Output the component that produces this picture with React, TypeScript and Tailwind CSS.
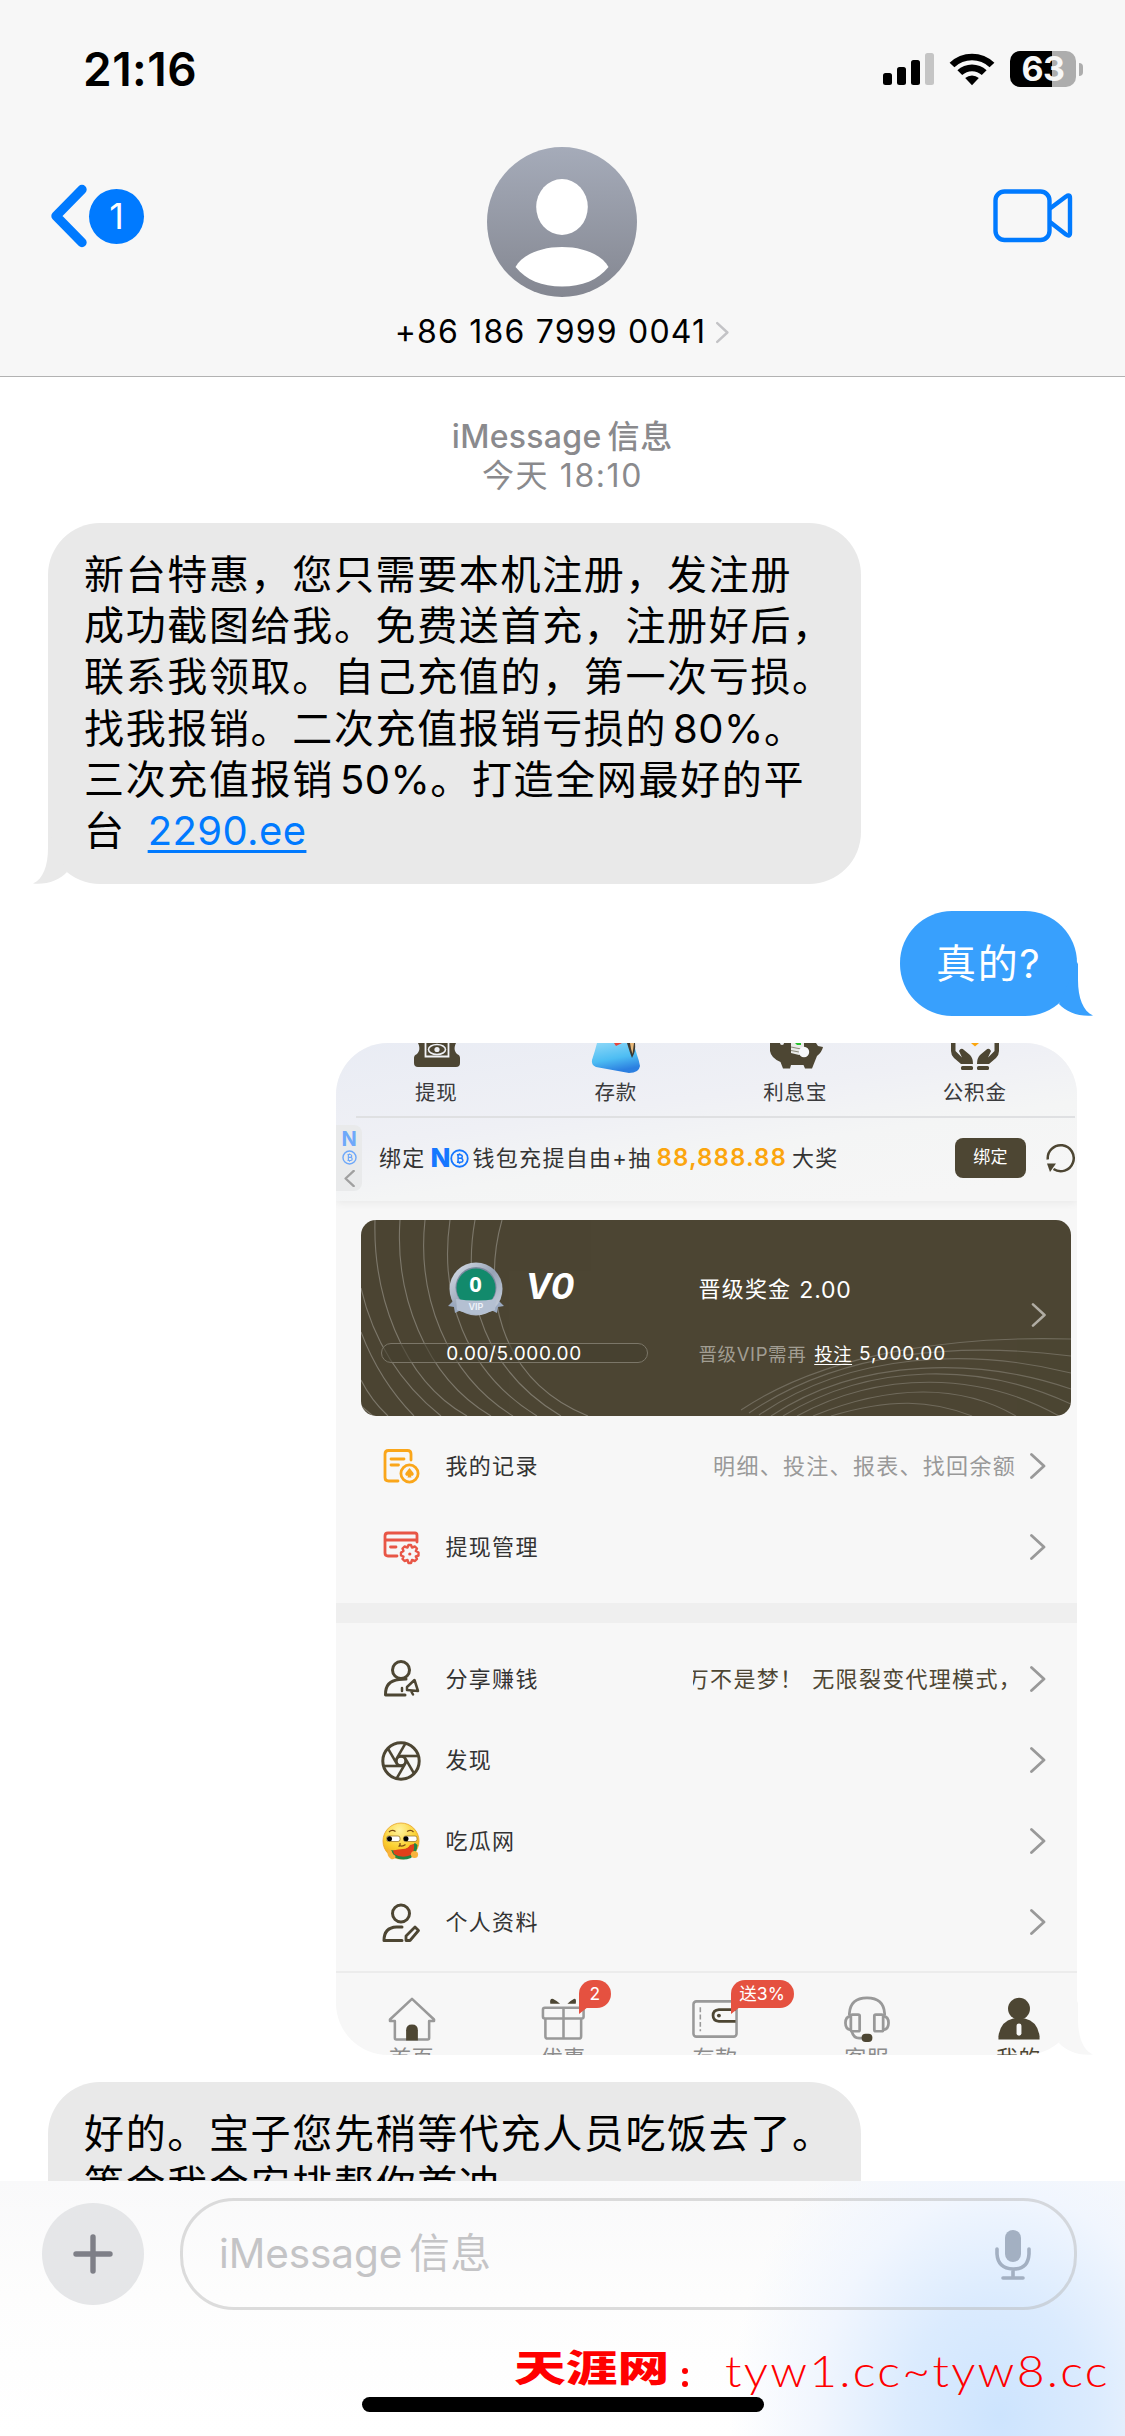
import React from "react";

const OLIVE = "#4d4633";

function Tail({ side, color }: { side: "left" | "right"; color: string }) {
  return (
    <svg
      className={
        side === "left"
          ? "absolute bottom-0 -left-[15px] h-[54px] w-[36px]"
          : "absolute bottom-0 -right-[16px] h-[54px] w-[36px] -scale-x-100"
      }
      viewBox="0 0 36 54"
    >
      <path d="M15 0V18C15 36 10 49 0 53.6C14 55 27 50 34 42Z" fill={color} />
    </svg>
  );
}

function Chevron({ className, width = 3 }: { className: string; width?: number }) {
  return (
    <svg className={className} viewBox="0 0 16 26" fill="none" stroke="currentColor" strokeWidth={width}>
      <path d="M1.5 1.5 14 13 1.5 24.5" strokeLinecap="round" strokeLinejoin="round" />
    </svg>
  );
}

function StatusBar() {
  return (
    <div className="flex h-[138px] items-start justify-between pl-[83px] pr-[42px]">
      <div className="mt-[42px] text-[46px] font-semibold leading-[54px] tracking-[0.5px] text-black">21:16</div>
      <div className="mt-[51px] flex h-9 items-center">
        <svg className="h-[34px] w-[51px]" viewBox="0 0 51 34">
          <rect x="0" y="21" width="9" height="12" rx="2.5" />
          <rect x="14" y="15" width="9" height="18" rx="2.5" />
          <rect x="28" y="8" width="9" height="25" rx="2.5" />
          <rect x="42" y="1" width="9" height="32" rx="2.5" fill="#c5c5c5" />
        </svg>
        <svg className="ml-[15px] h-[34px] w-[46px]" viewBox="0 0 46 34">
          <path d="M0.6 10.8A32 32 0 0 1 45.4 10.8L40.6 15.3A25.6 25.6 0 0 0 5.4 15.3Z" strokeLinejoin="round" />
          <path d="M8.4 18.3A21 21 0 0 1 37.6 18.3L32.8 23A14.6 14.6 0 0 0 13.2 23Z" />
          <path d="M16.2 26A10.4 10.4 0 0 1 29.8 26L23 33.2Z" />
        </svg>
        <div className="ml-[15px] flex h-9 w-[66px] items-center justify-center rounded-[10px] bg-[linear-gradient(90deg,#000_0_42px,#adadad_42px)] text-[34px] font-bold leading-9 tracking-[-0.5px] text-[#f7f7f7]">
          63
        </div>
        <div className="ml-[3px] h-[13px] w-[4px] rounded-r-full bg-[#adadad]" />
      </div>
    </div>
  );
}

function Header() {
  return (
    <header className="h-[377px] shrink-0 border-b border-[#b2b2b2] bg-[#f7f7f7]">
      <StatusBar />
      <div className="flex h-[238px] items-start justify-between pl-[51px] pr-[52px]">
        <div className="mt-[46px] flex w-[300px] items-center">
          <svg className="h-[64px] w-[37px]" viewBox="0 0 37 64" fill="none" stroke="#007aff" strokeWidth="9.4">
            <path d="M31 5.5 5 32 31 58.5" strokeLinecap="round" strokeLinejoin="round" />
          </svg>
          <div className="ml-px flex h-[55px] w-[55px] items-center justify-center rounded-full bg-[#007aff] text-[36px] leading-none text-white">
            1
          </div>
        </div>
        <div className="flex flex-col items-center">
          <svg className="mt-[9px] h-[150px] w-[150px]" viewBox="0 0 150 150">
            <defs>
              <linearGradient id="avatar" x1="0" y1="0" x2="0" y2="1">
                <stop offset="0" stopColor="#a5abb9" />
                <stop offset="1" stopColor="#848791" />
              </linearGradient>
            </defs>
            <circle cx="75" cy="75" r="75" fill="url(#avatar)" />
            <ellipse cx="75" cy="60" rx="25.8" ry="28" fill="#fff" />
            <path d="M28.5 120C35 108 53 100 75 100S115 108 121.500 120C111 133 95 139.500 75 139.500S39 133 28.500 120Z" fill="#fff" />
          </svg>
          <div className="mt-[14px] flex items-center">
            <span className="whitespace-pre text-[32px] leading-[42px] tracking-[1.2px] text-black">+86 186 7999 0041</span>
            <Chevron className="ml-[10px] h-[23px] w-[13px] text-[#c3c3c6]" />
          </div>
        </div>
        <div className="mt-[51px] flex w-[300px] justify-end">
          <svg className="h-[54px] w-[80px]" viewBox="0 0 80 54" fill="none" stroke="#007aff" strokeWidth="4.4" strokeLinejoin="round">
            <rect x="2.500" y="2.500" width="54" height="48.500" rx="9" />
            <path d="M57 19.500 73 7.500Q77 5 77 9V44Q77 48 73 45.500L57 33" />
          </svg>
        </div>
      </div>
    </header>
  );
}

function ReceivedBubble({ className, children, tail = true }: { className: string; children: React.ReactNode; tail?: boolean }) {
  return (
    <div className={"relative ml-[48px] w-[813px] shrink-0 rounded-[52px] bg-[#e9e9e9] pl-[36px] pt-[26px] text-[40px] leading-[51.2px] text-black " + className}>
      {children}
      {tail && <Tail side="left" color="#e9e9e9" />}
    </div>
  );
}

const Line = ({ children }: { children: React.ReactNode }) => (
  <div className="whitespace-pre tracking-[1.65px]">{children}</div>
);

/* ---------- shared picture: account page of a phone app ---------- */

function WithdrawIcon() {
  return (
    <svg className="h-8 w-14" viewBox="0 0 56 32">
      <path d="M9 0H47C45 4 45 8 48 11Q51 12 51 15V20Q51 24 47 24H9Q5 24 5 20V15Q5 12 8 11C11 8 11 4 9 0Z" fill={OLIVE} />
      <path d="M16.500 0V13.500H39.500V0" fill="none" stroke="#f2f3f7" strokeWidth="1.800" />
      <rect x="19" y="0" width="18" height="12" rx="3" fill={OLIVE} />
      <ellipse cx="28" cy="6.500" rx="8.500" ry="5" fill="none" stroke="#eef0f5" strokeWidth="1.600" />
      <circle cx="28" cy="6.500" r="2.600" fill="#eef0f5" />
    </svg>
  );
}

function BagIcon() {
  return (
    <svg className="h-8 w-14" viewBox="0 0 56 32">
      <defs>
        <linearGradient id="bag" x1="0" y1="0" x2="0.300" y2="1">
          <stop offset="0" stopColor="#8ed8f8" />
          <stop offset="0.600" stopColor="#4dbdf3" />
          <stop offset="1" stopColor="#2b7fe0" />
        </linearGradient>
      </defs>
      <path d="M9 0H46C47 8 51 16 52 23Q51 30 41 30L8 24Q3 22 4 17Q7 8 9 0Z" fill="url(#bag)" />
      <path d="M26 0H34L28 3Z" fill="#e5463b" />
      <path d="M39 0Q42 10 44 15Q48 8 47 0Z" fill="#3c3a33" />
      <path d="M42 0Q43 7 44.500 11L46 0Z" fill="#e9b97a" />
    </svg>
  );
}

function PiggyIcon() {
  return (
    <svg className="h-8 w-14" viewBox="0 0 56 32">
      <path d="M2 0H48L50 3L55 4Q54 9 49 13L47 18L44 25.500H37L35.500 22H23L22 25.500H15L12.500 19Q3 15 2 8Z" fill={OLIVE} />
      <path d="M23 0H36V9L31 12L23 10Z" fill="#e9eae8" />
      <path d="M23 4 33 6M23 7.500 31 9" stroke="#8d8b7c" strokeWidth="1.200" />
      <path d="M27 0H33V2H29Z" fill="#26c22c" />
      <circle cx="36" cy="9" r="5.200" fill="#f7f8fb" />
      <circle cx="14" cy="0" r="2" fill="#eef0f5" />
    </svg>
  );
}

function HandsIcon() {
  return (
    <svg className="h-8 w-14" viewBox="0 0 56 32" fill={OLIVE}>
      <path d="M24 0H32L28 3.500Z" fill="#fba50e" />
      <path d="M4 0H8.500V8L15 14.500L12 8Q14 4 17 7L23 12Q26 15 26 21H14L7 15Q4 12 4 8Z" />
      <path d="M52 0H47.500V8L41 14.500L44 8Q42 4 39 7L33 12Q30 15 30 21H42L49 15Q52 12 52 8Z" />
      <rect x="14" y="23" width="12" height="4" rx="1.500" />
      <rect x="30" y="23" width="12" height="4" rx="1.500" />
    </svg>
  );
}

function Coin({ className }: { className: string }) {
  return (
    <svg className={className} viewBox="0 0 20 20" fill="none" stroke="currentColor">
      <circle cx="10" cy="10" r="8.700" strokeWidth="1.900" />
      <path d="M7.300 6H11Q13 6.300 13 8T11 9.800H8.300M8.300 9.800H11.500Q13.600 10.200 13.600 12T11.500 14H7.300M8.500 6V14M10 4.500V6M10 14V15.500" strokeWidth="1.600" />
    </svg>
  );
}

const shortcuts = [
  { label: "提现", Icon: WithdrawIcon },
  { label: "存款", Icon: BagIcon },
  { label: "利息宝", Icon: PiggyIcon },
  { label: "公积金", Icon: HandsIcon },
];

const leftCurves = [
  "M0 160Q10 180 27 196",
  "M0 112Q18 160 53 196",
  "M0 68Q18 146 80 196",
  "M14 0C12 70 38 158 106 196",
  "M39 0C34 72 62 156 130 196",
  "M64 0C56 74 84 154 152 196",
  "M89 0C78 76 104 152 176 196",
  "M114 0C100 78 126 152 200 196",
  "M141 0C122 66 134 158 227 196",
  "M0 186 12 196",
];
const rightCurves = [
  "M380 190C470 130 600 116 710 119",
  "M388 193C480 130 600 122 710 136",
  "M398 195C490 132 610 128 710 153",
  "M410 196C500 136 620 138 710 169",
  "M422 196C510 142 620 142 710 184",
  "M436 196C520 150 620 152 698 196",
  "M452 196C530 164 600 164 655 196",
  "M470 196C530 178 570 180 611 196",
];

function VipCard() {
  return (
    <div className="relative ml-[24.5px] mt-[18.5px] h-[196px] w-[710px] shrink-0 overflow-hidden rounded-[15px] bg-[#4c4533]">
      <svg className="absolute inset-0 h-full w-full" viewBox="0 0 710 196" fill="none" stroke="#fff" strokeWidth="1.100">
        <g opacity="0.270">{leftCurves.map((d) => <path key={d} d={d} />)}</g>
        <g opacity="0.200">{rightCurves.map((d) => <path key={d} d={d} />)}</g>
      </svg>
      <div className="relative flex h-full">
        <div className="w-[338px] pl-[20px] pt-[40px]">
          <div className="flex h-[58px] items-start pl-[66px]">
            <svg className="h-[56px] w-[58px] shrink-0" viewBox="0 0 58 56">
              <defs>
                <linearGradient id="rim" x1="0" y1="0" x2="1" y2="1">
                  <stop offset="0" stopColor="#dfe5ee" />
                  <stop offset="0.500" stopColor="#97a3b6" />
                  <stop offset="1" stopColor="#cfd7e3" />
                </linearGradient>
              </defs>
              <path d="M1 46 6 41 4 37H54L52 41 57 46 51 47 50 53 44 50H14L8 53 7 47Z" fill="#9aa9c0" />
              <circle cx="29" cy="29" r="26.500" fill="url(#rim)" />
              <circle cx="29" cy="27.500" r="20.500" fill="#7c8aa0" />
              <circle cx="29" cy="28" r="19.500" fill="#128a6c" />
              <path d="M9 39Q29 42 49 39L48 50Q29 58 10 50Z" fill="#b4c0d2" />
              <text x="28.500" y="32" textAnchor="middle" fontFamily="Noto Sans" fontWeight="700" fontSize="22" fill="#fff">0</text>
              <text x="29" y="49.500" textAnchor="middle" fontFamily="Inter" fontWeight="600" fontSize="9" fill="#eef3fa">VIP</text>
            </svg>
            <span className="ml-[21px] mt-[5px] text-[35px] font-bold italic leading-[42px] text-white">V0</span>
          </div>
          <div className="mt-[25px] flex h-[20px] w-[267px] items-center justify-center rounded-full border-[1.5px] border-[#7b7668] bg-[#453f2f]/60">
            <span className="mt-[2px] whitespace-pre text-[19px] leading-none tracking-[0.6px] text-white">0.00/5.000.00</span>
          </div>
        </div>
        <div className="flex-1 text-white">
          <div className="mt-[53px] flex h-[32px] items-center whitespace-pre text-[22px] leading-[32px]">
            <span className="tracking-[1.2px]">晋级奖金</span>
            <span className="ml-[8px] mt-[3px] text-[23px] tracking-[0.8px]">2.00</span>
          </div>
          <div className="mt-[35px] flex h-[28px] items-center whitespace-pre text-[18.5px] leading-[28px]">
            <span className="tracking-[0.6px] text-[#a19d92]">晋级VIP需再</span>
            <span className="ml-[8px] tracking-[0.4px] underline decoration-1 underline-offset-[3px]">投注</span>
            <span className="ml-[7px] text-[19px] tracking-[0.8px]">5,000.00</span>
          </div>
        </div>
        <Chevron className="mr-[24px] mt-[83px] h-[24px] w-[16px] text-[#b0aca3]" width={2.8} />
      </div>
    </div>
  );
}

const iconBox = "h-[42px] w-[42px]";

function RecordIcon() {
  return (
    <svg className={iconBox} viewBox="0 0 42 42" fill="none" stroke="#faa61a" strokeWidth="2.800" strokeLinecap="round">
      <path d="M31 14V8Q31 4.500 27.500 4.500H8.500Q5 4.500 5 8V31.500Q5 35 8.500 35H18M11 13H24M11 19H18.500" />
      <circle cx="29.500" cy="27.500" r="8.600" />
      <path d="M29.500 22 33.500 27Q34.500 30 31 29.800L31.500 31.500H27.500L28 29.800Q24.500 30 25.500 27Z" fill="#faa61a" stroke="none" />
    </svg>
  );
}

function WithdrawManageIcon() {
  return (
    <svg className={iconBox} viewBox="0 0 42 42" fill="none" stroke="#e85646" strokeWidth="2.800" strokeLinecap="round">
      <path d="M37 15V8Q37 6 35 6H8Q5 6 5 9V26Q5 29 8 29H17M5 13H37M10.500 20H16" />
      <path
        strokeWidth="2.400"
        strokeLinejoin="round"
        d="M27.500 20.500 28.500 18H31L32 20.500 35 19.500 37 21.500 35.800 24 38.500 25.500V28.500L35.800 29.500 37 32 35 34 32 33 31 36H28.500L27.500 33 24.500 34 22.500 32 23.500 29.500 21 28.500V25.500L23.500 24 22.500 21.500 24.500 19.500Z"
      />
      <circle cx="29.800" cy="27" r="1.600" fill="#e85646" stroke="none" />
    </svg>
  );
}

function ShareIcon() {
  return (
    <svg className={iconBox} viewBox="0 0 42 42" fill="none" stroke={OLIVE} strokeWidth="3" strokeLinecap="round" strokeLinejoin="round">
      <circle cx="21" cy="11" r="8.500" />
      <path d="M25 36H5.500Q5 22 19 20.500L26 20" />
      <path d="M27 28 34.500 21 38 32 27 31ZM31 32 33 35.500M22 29V32" strokeWidth="2.500" />
    </svg>
  );
}

function DiscoverIcon() {
  return (
    <svg className={iconBox} viewBox="0 0 42 42" fill="none" stroke={OLIVE} strokeWidth="3">
      <circle cx="21" cy="21" r="18.200" />
      <circle cx="21" cy="21" r="4.300" strokeWidth="2" />
      {[0, 60, 120, 180, 240, 300].map((a) => (
        <path key={a} d="M18 16H38" transform={`rotate(${a} 21 21)`} strokeWidth="2.600" />
      ))}
    </svg>
  );
}

function MelonIcon() {
  return (
    <svg className={iconBox} viewBox="0 0 42 42">
      <defs>
        <radialGradient id="face" cx="0.450" cy="0.200" r="0.850">
          <stop offset="0" stopColor="#fff3a0" />
          <stop offset="0.550" stopColor="#fbd132" />
          <stop offset="1" stopColor="#ee9a18" />
        </radialGradient>
      </defs>
      <circle cx="21" cy="20" r="18" fill="url(#face)" stroke="#e9a22a" strokeWidth="0.800" />
      <path d="M11 29Q24 32 35 22L37.500 24Q37 32 31 37Q22 40.500 14 36Z" fill="#1f8544" />
      <path d="M13 29.500Q19 28 23 28Q28 28 30 24L34 23Q35 30 31 34Q22 38 14 33Z" fill="#e0401a" />
      <rect x="6.500" y="15" width="13.500" height="5.500" rx="2" fill="#fff" stroke="#a07a28" strokeWidth="0.800" />
      <rect x="23.500" y="15" width="13.500" height="5.500" rx="2" fill="#fff" stroke="#a07a28" strokeWidth="0.800" />
      <circle cx="9.500" cy="17.800" r="2.500" />
      <circle cx="26" cy="17.800" r="2.500" />
      <path d="M9 11Q12 8 15.500 10.500M27 10.500Q31 8 33.500 11M18.500 25.500Q20.500 25 20 22M19 24Q22 26.500 25.500 23.500" fill="none" stroke="#7c4d14" strokeWidth="1.200" />
      <path d="M8 28Q6 35 11 38Q15 39 15.500 35Q12 33 11 29Z" fill="#f8b33c" />
      <circle cx="34.500" cy="33.500" r="3.600" fill="#f8b33c" />
    </svg>
  );
}

function ProfileIcon() {
  return (
    <svg className={iconBox} viewBox="0 0 42 42" fill="none" stroke={OLIVE} strokeWidth="3" strokeLinecap="round" strokeLinejoin="round">
      <circle cx="21" cy="11.500" r="8.500" />
      <path d="M22 25H16.500Q4 25.500 4 38.500H22" />
      <path d="M26 34 35 25 38.500 28.500 30 38.500H26Z" strokeWidth="2.800" />
    </svg>
  );
}

function MenuRow({ Icon, label, children }: { Icon: React.FC; label: string; children?: React.ReactNode }) {
  return (
    <div className="flex h-[81px] shrink-0 items-center pl-[44px] pr-[31px]">
      <Icon />
      <span className="ml-[23.5px] text-[22px] tracking-[1.3px] text-[#333]">{label}</span>
      <div className="flex flex-1 justify-end overflow-hidden">{children}</div>
      <Chevron className="mb-[2px] ml-[14px] h-[26px] w-[16px] text-[#999]" width={2.8} />
    </div>
  );
}

function RedBadge({ className, children }: { className: string; children: React.ReactNode }) {
  return (
    <div className={"absolute flex h-[28px] items-center justify-center rounded-[14px] rounded-bl-none bg-[#e55140] text-[17.5px] leading-none text-white " + className}>
      {children}
      <svg className="absolute left-0 top-[27px] h-[7px] w-[9px]" viewBox="0 0 9 7">
        <path d="M0 0H9L0 7Z" fill="#e55140" />
      </svg>
    </div>
  );
}

function HomeIcon() {
  return (
    <svg className="h-[48px] w-[52px]" viewBox="0 0 52 48" fill="none" stroke="#999" strokeWidth="2.600" strokeLinejoin="round">
      <path d="M26 3 48.500 24V25.500H43.500V43Q43.500 44.500 42 44.500H10Q8.500 44.500 8.500 43V25.500H3.500V24Z" />
      <path d="M20 45.500V35Q20 29 26 29T32 35V45.500Z" fill={OLIVE} stroke="none" />
    </svg>
  );
}

function GiftIcon() {
  return (
    <svg className="h-[48px] w-[52px]" viewBox="0 0 52 48" fill="none" stroke="#999" strokeWidth="2.600">
      <rect x="4.500" y="12" width="41.500" height="11" rx="2" />
      <path d="M7 23V41Q7 43.500 9.500 43.500H41Q43.500 43.500 43.500 41V23M25.500 12V43.500" />
      <path d="M12 8Q11 2 15 3Q19 5 22 8ZM38 8Q39 2 36 3Q32 5 29.500 8Z" fill={OLIVE} stroke="none" />
    </svg>
  );
}

function WalletIcon() {
  return (
    <svg className="h-[48px] w-[52px]" viewBox="0 0 52 48" fill="none" stroke="#999" strokeWidth="2.600">
      <rect x="4" y="5.500" width="44" height="36" rx="3" />
      <path d="M11 11.500V36" strokeWidth="1.600" strokeDasharray="5 2.500" />
      <path d="M47 14H30Q24 14.500 24 20T30 25.800H47" stroke={OLIVE} strokeWidth="2.800" />
      <circle cx="30" cy="20" r="2" fill={OLIVE} stroke="none" />
    </svg>
  );
}

function SupportIcon() {
  return (
    <svg className="h-[48px] w-[52px]" viewBox="0 0 52 48" fill="none" stroke="#999" strokeWidth="2.800">
      <path d="M8 20V18Q9 2 26 2T44 18V20" />
      <rect x="9.500" y="19" width="9" height="17" rx="1.500" />
      <rect x="33.500" y="19" width="9" height="17" rx="1.500" />
      <path d="M9.500 20.500Q4 21 4 27.500T9.500 34.500M42.500 20.500Q48 21 48 27.500T42.500 34.500M10.500 36Q12 43 18 43H22" />
      <rect x="20.500" y="38.500" width="11" height="8.500" rx="4" fill={OLIVE} stroke="none" />
    </svg>
  );
}

function MeIcon() {
  return (
    <svg className="h-[48px] w-[52px]" viewBox="0 0 52 48" fill={OLIVE}>
      <circle cx="26" cy="13" r="11.200" />
      <path d="M5 44.500V41Q7 26 20 23H32Q45 26 47 41V44.500Z" />
      <rect x="23.500" y="28" width="5" height="12.500" rx="2.500" fill="#f7f7f7" />
    </svg>
  );
}

const tabs: { label: string; Icon: React.FC; active?: boolean }[] = [
  { label: "首页", Icon: HomeIcon },
  { label: "优惠", Icon: GiftIcon },
  { label: "存款", Icon: WalletIcon },
  { label: "客服", Icon: SupportIcon },
  { label: "我的", Icon: MeIcon, active: true },
];

function SharedPicture() {
  return (
    <div className="relative ml-[336px] mt-[27px] h-[1012px] w-[741px] shrink-0">
      <div className="flex h-full w-full flex-col overflow-hidden rounded-[52px] bg-[#f7f7f7]">
        <div className="h-[158px] shrink-0 bg-[linear-gradient(172deg,#e9ecf4_0%,#eff0f5_40%,#f4f5f5_62%,#f6f6f6_90%)] shadow-[0_2px_8px_rgba(0,0,0,0.06)]">
          <div className="flex h-[73px] pl-[11px]">
            {shortcuts.map(({ label, Icon }) => (
              <div key={label} className="flex w-[179.500px] flex-col items-center">
                <Icon />
                <span className="-ml-px mt-[5px] text-[20.500px] leading-[26px] tracking-[0.8px] text-[#3a3a3c]">{label}</span>
              </div>
            ))}
          </div>
          <div className="ml-[20px] mr-[2px] h-[2px] bg-[#dfe0e2]" />
          <div className="flex h-[80px] items-center">
            <div className="flex h-[66px] w-[26px] flex-col items-center rounded-r-[8px] bg-[#e9eaeb] pt-[5px] text-[#6ea8fa]">
              <span className="text-[20px] font-bold leading-[19px]">N</span>
              <Coin className="mt-px h-[15px] w-[15px]" />
              <Chevron className="mt-[5px] h-[17px] w-[11px] rotate-180 text-[#a0a0a0]" width={3.600} />
            </div>
            <div className="ml-[17px] flex items-center whitespace-pre text-[22px] leading-none tracking-[1.300px] text-[#333]">
              <span>绑定</span>
              <span className="ml-[5px] text-[26px] font-extrabold tracking-[-1px] text-[#1677ff]">N</span>
              <Coin className="h-[19px] w-[19px] text-[#1677ff]" />
              <span className="ml-[4px]">钱包充提自由+抽</span>
              <span className="ml-[5px] text-[24px] font-semibold tracking-[1.1px] text-[#fba50e]">88,888.88</span>
              <span className="ml-[5px]">大奖</span>
            </div>
            <div className="ml-auto flex h-[40px] w-[71px] items-center justify-center rounded-[8px] bg-[#4d4633] text-[17px] tracking-[0.300px] text-white">
              绑定
            </div>
            <svg className="ml-[20px] mr-px h-[30px] w-[30px]" viewBox="0 0 30 30" fill="none" stroke={OLIVE} strokeWidth="2.500">
              <path d="M1.800 16.500A13 13 0 1 1 7.500 26" />
              <path d="M1 20.500 10 20.500 4 29Z" fill={OLIVE} stroke="none" />
            </svg>
          </div>
        </div>
        <VipCard />
        <div className="mt-[10.5px] shrink-0">
          <MenuRow Icon={RecordIcon} label="我的记录">
            <span className="whitespace-pre text-[22px] tracking-[1.300px] text-[#999]">明细、投注、报表、找回余额</span>
          </MenuRow>
          <MenuRow Icon={WithdrawManageIcon} label="提现管理" />
        </div>
        <div className="mb-[16px] mt-[15px] h-[20px] shrink-0 bg-[#efefef]" />
        <MenuRow Icon={ShareIcon} label="分享赚钱">
          <div className="flex w-[323px] justify-end overflow-hidden whitespace-pre text-[22px] tracking-[1.300px] text-[#4d4633]">
            <span>万不是梦！</span>
            <span className="-mr-[6px] ml-[9px]">无限裂变代理模式，</span>
          </div>
        </MenuRow>
        <MenuRow Icon={DiscoverIcon} label="发现" />
        <MenuRow Icon={MelonIcon} label="吃瓜网" />
        <MenuRow Icon={ProfileIcon} label="个人资料" />
        <div className="mt-[8px] flex h-[100px] shrink-0 border-t-2 border-[#ececec]">
          {tabs.map(({ label, Icon, active }) => (
            <div key={label} className="relative flex w-[151.800px] shrink-0 flex-col items-center pt-[23px]">
              <Icon />
              <span className={"-ml-px mt-[2px] whitespace-pre text-[22px] leading-[26px] tracking-[0.500px] " + (active ? "text-[#4d4633]" : "text-[#8c8c8c]")}>
                {label}
              </span>
              {label === "优惠" && <RedBadge className="left-[91px] top-[7px] w-[32px]">2</RedBadge>}
              {label === "存款" && <RedBadge className="left-[91px] top-[7px] w-[63px]">送3%</RedBadge>}
            </div>
          ))}
        </div>
      </div>
      <Tail side="right" color="#f7f7f7" />
    </div>
  );
}

function Composer() {
  return (
    <footer className="h-[255px] shrink-0 overflow-hidden bg-[radial-gradient(ellipse_270px_330px_at_1000px_235px,#cde4fe_0%,#dbebfe_35%,#f1f6fe_68%,rgba(255,255,255,0)_100%),linear-gradient(180deg,#f9f9fa_0%,#fdfdfd_45%,#ffffff_100%)]">
      <div className="flex items-center pl-[42px] pt-[17px]">
        <div className="flex h-[102px] w-[102px] items-center justify-center rounded-full bg-[#e5e6e8]">
          <svg className="h-[40px] w-[40px]" viewBox="0 0 40 40" stroke="#7e7f87" strokeWidth="5.400" strokeLinecap="round">
            <path d="M20 3V37M3 20H37" />
          </svg>
        </div>
        <div className="ml-[36px] flex h-[112px] w-[897px] items-center justify-between rounded-[54px] border-[3px] border-[#b4b4b4]/45 pl-[36px] pr-[43px]">
          <div className="flex items-center gap-[7px] whitespace-pre text-[40.500px] text-[#c4c4c6]">
            <span className="tracking-[-0.1px]">iMessage</span>
            <span className="tracking-[0.8px]">信息</span>
          </div>
          <svg className="mt-px h-[52px] w-[36px]" viewBox="0 0 36 52" fill="none" stroke="#a3b0c2" strokeWidth="3.600" strokeLinecap="round">
            <rect x="10" y="1" width="16" height="32" rx="8" fill="#a3b0c2" stroke="none" />
            <path d="M2 20V25Q3 39.500 18 40T34 25V20M18 40V47M8 49H28" />
          </svg>
        </div>
      </div>
      <div className="ml-[514px] mt-[33px] flex h-[50px] items-center whitespace-pre text-[#f00]">
        <div className="flex w-[160px] items-center">
          <span className="origin-left scale-x-[1.400] text-[37px] font-black leading-none">天涯网</span>
        </div>
        <svg className="ml-[6px] mt-[20px] h-[22px] w-[10px]" viewBox="0 0 10 22" fill="#f00">
          <circle cx="5" cy="4" r="3" />
          <circle cx="5" cy="17" r="3" />
        </svg>
        <span className="ml-[35px] mt-[4px] origin-left scale-x-[1.120] font-[Lato] text-[43px] font-light leading-none tracking-[2px]">tyw1.cc~tyw8.cc</span>
      </div>
      <div className="ml-[362px] mt-[4px] h-[15px] w-[402px] rounded-full bg-black" />
    </footer>
  );
}

export default function App() {
  return (
    <div className="flex h-[2436px] w-[1125px] flex-col overflow-hidden bg-white font-['Inter','Noto_Sans_CJK_SC',sans-serif]">
      <Header />
      <main className="flex h-[1804px] flex-col overflow-hidden">
        <div className="mt-[40px] flex shrink-0 flex-col items-center whitespace-pre text-[32px] leading-[39px] text-[#8a8a8d]">
          <div className="flex gap-[6px] font-medium">
            <span className="tracking-[0.3px]">iMessage</span>
            <span className="tracking-[0.8px]">信息</span>
          </div>
          <div className="tracking-[1.6px]">今天 18:10</div>
        </div>
        <ReceivedBubble className="mt-[28px] h-[361px]">
          <Line>新台特惠，您只需要本机注册，发注册</Line>
          <Line>成功截图给我。免费送首充，注册好后，</Line>
          <Line>联系我领取。自己充值的，第一次亏损。</Line>
          <Line>
            找我报销。二次充值报销亏损的<span className="ml-[6px] tracking-[0.500px]">80%</span>。
          </Line>
          <Line>
            三次充值报销<span className="ml-[6px] tracking-[0.500px]">50%</span>。打造全网最好的平
          </Line>
          <Line>
            台<span className="ml-[22px] tracking-[0.4px] text-[#007aff] underline decoration-[3px] underline-offset-[5px]">2290.ee</span>
          </Line>
        </ReceivedBubble>
        <div className="relative ml-[900px] mt-[27px] flex h-[105px] w-[177px] shrink-0 items-center rounded-[52px] bg-[#38a0fd] pl-[36px]">
          <span className="whitespace-pre text-[40px] tracking-[1.650px] text-white">真的?</span>
          <Tail side="right" color="#38a0fd" />
        </div>
        <SharedPicture />
        <ReceivedBubble className="mt-[27px] h-[220px]" tail={false}>
          <Line>好的。宝子您先稍等代充人员吃饭去了。</Line>
          <Line>等会我会安排帮你首冲</Line>
        </ReceivedBubble>
      </main>
      <Composer />
    </div>
  );
}
